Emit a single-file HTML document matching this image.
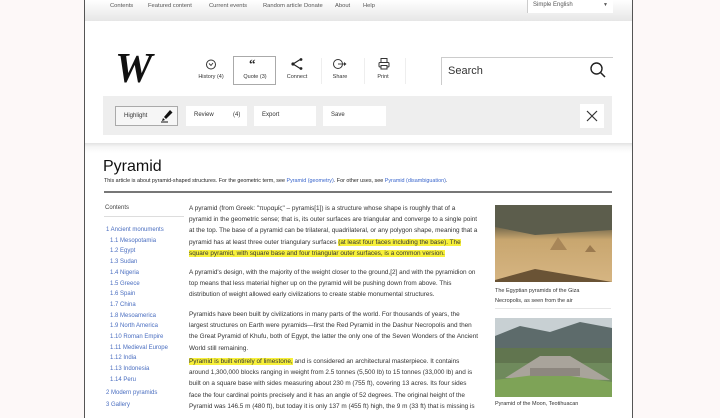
<!DOCTYPE html>
<html><head><meta charset="utf-8"><style>
*{margin:0;padding:0;box-sizing:border-box}
body{width:720px;height:405px;overflow:hidden;background:#fdf8f8;font-family:"Liberation Sans",sans-serif;position:relative;color:#222}
.a{position:absolute;white-space:nowrap}
#frame{position:absolute;left:84px;top:-2px;width:549px;height:420px;background:#fff;border-left:1.5px solid #555;border-right:1.5px solid #555}
#nav{position:absolute;left:85px;top:0;width:547px;height:21px;background:linear-gradient(#fff,#e6e6e6)}
.nv{font-size:5.8px;color:#555;top:3px}
.tb{font-size:5.5px;color:#333;text-align:center;width:44px}
.btn{position:absolute;top:106px;height:20px;background:#fff;font-size:6px;color:#333;padding:6px 0 0 8px}
.t{position:absolute;left:189px;font-size:6.4px;line-height:11.2px;color:#333;width:295px;white-space:nowrap}
.hl{background:#f7f03a}
.toc{position:absolute;left:106px;font-size:6px;color:#4a6ec0;line-height:10.7px}
a{color:#3a66cc;text-decoration:none}
</style></head><body>
<div id="frame"></div>
<div id="nav"></div>
<div class="a nv" style="left:110px">Contents</div>
<div class="a nv" style="left:148px">Featured content</div>
<div class="a nv" style="left:209px">Current events</div>
<div class="a nv" style="left:263px">Random article</div>
<div class="a nv" style="left:304px">Donate</div>
<div class="a nv" style="left:335px">About</div>
<div class="a nv" style="left:363px">Help</div>
<div class="a" style="left:527px;top:0;width:86px;height:13px;background:#fff;border-left:1px solid #ccc;font-size:6px;color:#555;padding:2px 0 0 5px">Simple English<span style="position:absolute;right:5px;top:2px;font-size:5px">▼</span></div>

<div class="a" style="left:115px;top:45px;font-family:'Liberation Serif',serif;font-style:italic;font-weight:bold;font-size:42px;color:#111">W</div>

<div class="a" style="left:233px;top:56px;width:43px;height:29px;border:1px solid #aaa"></div>
<div class="a" style="left:321px;top:58px;width:1px;height:26px;background:#eee"></div>
<div class="a" style="left:364px;top:58px;width:1px;height:26px;background:#eee"></div>
<div class="a" style="left:405px;top:58px;width:1px;height:26px;background:#eee"></div>
<svg class="a" style="left:204px;top:58px" width="14" height="13" viewBox="0 0 14 13"><circle cx="7" cy="6.5" r="4.5" fill="none" stroke="#333" stroke-width="1"/><path d="M5 5.5L7 7.5L9 5" fill="none" stroke="#333" stroke-width="0.9"/></svg>
<div class="a" style="left:249px;top:56px;font-size:13px;font-weight:bold;color:#222;font-family:'Liberation Serif',serif">“</div>
<svg class="a" style="left:290px;top:57px" width="14" height="14" viewBox="0 0 14 14"><path d="M11 2L3 7L11 12" fill="none" stroke="#222" stroke-width="1.2"/><circle cx="3" cy="7" r="1.6" fill="#222"/><circle cx="11" cy="2.5" r="1.4" fill="#222"/><circle cx="11" cy="11.5" r="1.4" fill="#222"/></svg>
<svg class="a" style="left:332px;top:57px" width="16" height="14" viewBox="0 0 16 14"><circle cx="6" cy="7" r="4.5" fill="none" stroke="#333" stroke-width="1"/><path d="M6 7H12" stroke="#333" stroke-width="0.9"/><path d="M12 5L14.5 7L12 9Z" fill="#333"/></svg>
<svg class="a" style="left:377px;top:57px" width="14" height="14" viewBox="0 0 14 14"><rect x="4" y="1.5" width="6" height="4" fill="none" stroke="#333"/><rect x="2" y="5.5" width="10" height="4.5" rx="1" fill="none" stroke="#333"/><rect x="4" y="8.5" width="6" height="3.5" fill="#fff" stroke="#333"/></svg>
<div class="a tb" style="left:189px;top:74px">History (4)</div>
<div class="a tb" style="left:233px;top:74px">Quote (3)</div>
<div class="a tb" style="left:275px;top:74px">Connect</div>
<div class="a tb" style="left:318px;top:74px">Share</div>
<div class="a tb" style="left:361px;top:74px">Print</div>

<div class="a" style="left:441px;top:57px;width:172px;height:28px;border:1px solid #ccc;border-right:none;border-bottom:none;background:#fff"></div>
<div class="a" style="left:448px;top:65px;font-size:11px;color:#333">Search</div>
<svg class="a" style="left:589px;top:61px" width="18" height="18" viewBox="0 0 18 18"><circle cx="7.5" cy="7.5" r="5.5" fill="none" stroke="#222" stroke-width="1.4"/><path d="M11.5 11.5L16 16" stroke="#222" stroke-width="1.5"/></svg>

<div class="a" style="left:103px;top:96px;width:509px;height:39px;background:#eeeeee"></div>
<div class="btn" style="left:115px;width:63px;border:1px solid #aaa;background:#f6f6f6">Highlight</div>
<svg class="a" style="left:159px;top:108px" width="15" height="15" viewBox="0 0 15 15"><path d="M5 9L11 2L13.5 4.5L7 11Z" fill="#111"/><path d="M4 10L6 12L3 13Z" fill="#111"/><path d="M2 14H9" stroke="#111"/></svg>
<div class="btn" style="left:186px;width:61px">Review<span style="position:absolute;left:47px">(4)</span></div>
<div class="btn" style="left:254px;width:62px">Export</div>
<div class="btn" style="left:323px;width:63px">Save</div>
<div class="a" style="left:580px;top:104px;width:24px;height:24px;background:#fff"></div>
<svg class="a" style="left:586px;top:110px" width="12" height="12" viewBox="0 0 12 12"><path d="M1 1L11 11M11 1L1 11" stroke="#333" stroke-width="1.2"/></svg>

<div class="a" style="left:85px;top:143px;width:547px;height:10px;background:linear-gradient(#e2e2e2,#f6f6f6 40%,#fff)"></div>

<div class="a" style="left:103px;top:158px;font-size:16px;color:#111">Pyramid</div>
<div class="a" style="left:104px;top:178px;font-size:5.4px;color:#222">This article is about pyramid-shaped structures. For the geometric term, see <a>Pyramid (geometry)</a>. For other uses, see <a>Pyramid (disambiguation)</a>.</div>
<div class="a" style="left:104px;top:191px;width:508px;height:2px;background:#777"></div>

<div class="a" style="left:105px;top:205px;font-size:6px;color:#444">Contents</div>
<div class="a" style="left:104px;top:216px;width:80px;height:1px;background:#ddd"></div>
<div class="toc" style="top:225px">1 Ancient monuments<br><span style="padding-left:4px">1.1 Mesopotamia</span><br><span style="padding-left:4px">1.2 Egypt</span><br><span style="padding-left:4px">1.3 Sudan</span><br><span style="padding-left:4px">1.4 Nigeria</span><br><span style="padding-left:4px">1.5 Greece</span><br><span style="padding-left:4px">1.6 Spain</span><br><span style="padding-left:4px">1.7 China</span><br><span style="padding-left:4px">1.8 Mesoamerica</span><br><span style="padding-left:4px">1.9 North America</span><br><span style="padding-left:4px">1.10 Roman Empire</span><br><span style="padding-left:4px">1.11 Medieval Europe</span><br><span style="padding-left:4px">1.12 India</span><br><span style="padding-left:4px">1.13 Indonesia</span><br><span style="padding-left:4px">1.14 Peru</span><br><span style="line-height:14px">2 Modern pyramids</span><br>3 Gallery</div>

<div class="t" style="top:203px">A pyramid (from Greek: "πυραμίς" – pyramis[1]) is a structure whose shape is roughly that of a<br>pyramid in the geometric sense; that is, its outer surfaces are triangular and converge to a single point<br>at the top. The base of a pyramid can be trilateral, quadrilateral, or any polygon shape, meaning that a<br>pyramid has at least three outer triangulary surfaces <span class="hl">(at least four faces including the base). The</span><br><span class="hl">square pyramid, with square base and four triangular outer surfaces, is a common version.</span></div>
<div class="t" style="top:267px">A pyramid's design, with the majority of the weight closer to the ground,[2] and with the pyramidion on<br>top means that less material higher up on the pyramid will be pushing down from above. This<br>distribution of weight allowed early civilizations to create stable monumental structures.</div>
<div class="t" style="top:309px">Pyramids have been built by civilizations in many parts of the world. For thousands of years, the<br>largest structures on Earth were pyramids—first the Red Pyramid in the Dashur Necropolis and then<br>the Great Pyramid of Khufu, both of Egypt, the latter the only one of the Seven Wonders of the Ancient<br>World still remaining.</div>
<div class="t" style="top:356px"><span class="hl">Pyramid is built entirely of limestone,</span> and is considered an architectural masterpiece. It contains<br>around 1,300,000 blocks ranging in weight from 2.5 tonnes (5,500 lb) to 15 tonnes (33,000 lb) and is<br>built on a  square base with sides measuring about 230 m (755 ft), covering 13 acres. Its four sides<br>face the four cardinal points precisely and it has an angle of 52 degrees. The original height of the<br>Pyramid was 146.5 m (480 ft), but today it is only 137 m (455 ft) high, the 9 m (33 ft) that is missing is</div>

<svg class="a" style="left:495px;top:205px" width="117" height="77" viewBox="0 0 117 77"><defs><linearGradient id="g1" x1="0" y1="0" x2="0" y2="1"><stop offset="0" stop-color="#5b5a48"/><stop offset="0.3" stop-color="#7d6f50"/><stop offset="0.45" stop-color="#c8a66f"/><stop offset="1" stop-color="#d6b582"/></linearGradient></defs><rect width="117" height="77" fill="url(#g1)"/><path d="M0 22L40 30L117 25V0H0Z" fill="#5c5d4c"/><path d="M55 45L63 32L72 45Z" fill="#a88658"/><path d="M90 47L95 40L101 47Z" fill="#9b7a4f"/><path d="M0 75L40 64L117 77H0Z" fill="#6a5335"/></svg>
<div class="a" style="left:495px;top:286px;font-size:5.5px;line-height:10px;color:#333">The Egyptian pyramids of the Giza<br>Necropolis, as seen from the air</div>
<div class="a" style="left:495px;top:308px;width:116px;height:1px;background:#e6e6e6"></div>
<svg class="a" style="left:495px;top:318px" width="117" height="79" viewBox="0 0 117 79"><rect width="117" height="79" fill="#6f8a5c"/><rect width="117" height="20" fill="#c8d0d3"/><path d="M0 18L25 8L55 14L85 4L117 10V30H0Z" fill="#5d6b6b"/><path d="M0 30H117V45H0Z" fill="#61754f"/><path d="M10 60L45 38L75 38L115 62Z" fill="#a9a49b"/><path d="M0 62L55 55L117 64V79H0Z" fill="#7ea357"/><path d="M35 50H85V58H35Z" fill="#8d877f"/></svg>
<div class="a" style="left:495px;top:401px;font-size:5.5px;color:#333">Pyramid of the Moon, Teotihuacan</div>
</body></html>
